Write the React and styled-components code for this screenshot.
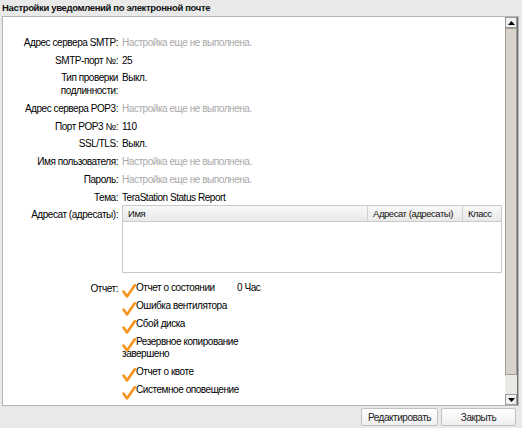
import React from 'react';
import styled, { createGlobalStyle } from 'styled-components';

const GlobalStyle = createGlobalStyle`
  html, body {
    margin: 0;
    padding: 0;
    background: #e9e9e9;
  }
  body {
    font-family: "Liberation Sans", Arial, sans-serif;
    font-size: 10px;
    letter-spacing: -0.45px;
    color: #000;
  }
`;

const rows = [
  { label: 'Адрес сервера SMTP:', value: 'Настройка еще не выполнена.', muted: true },
  { label: 'SMTP-порт №:', value: '25' },
  { label: 'Тип проверки подлинности:', value: 'Выкл.' },
  { label: 'Адрес сервера POP3:', value: 'Настройка еще не выполнена.', muted: true },
  { label: 'Порт POP3 №:', value: '110' },
  { label: 'SSL/TLS:', value: 'Выкл.' },
  { label: 'Имя пользователя:', value: 'Настройка еще не выполнена.', muted: true },
  { label: 'Пароль:', value: 'Настройка еще не выполнена.', muted: true },
  { label: 'Тема:', value: 'TeraStation Status Report' },
];

const reports = [
  'Отчет о состоянии',
  'Ошибка вентилятора',
  'Сбой диска',
  'Резервное копирование завершено',
  'Отчет о квоте',
  'Системное оповещение',
];

const Check = () => (
  <CheckIcon viewBox="0 0 14 14">
    <path d="M1.5 7.5 L5 12.5 L12.8 1.2" fill="none" stroke="#f7941d" strokeWidth="2.6" strokeLinecap="round" strokeLinejoin="round" />
  </CheckIcon>
);

const Arrow = ({ up }) => (
  <svg width="7" height="4" viewBox="0 0 7 4">
    <path d={up ? 'M0 4 L3.5 0 L7 4 Z' : 'M0 0 L3.5 4 L7 0 Z'} fill="#000" />
  </svg>
);

const App = () => {
  return (
    <Window>
      <GlobalStyle />
      <Title>Настройки уведомлений по электронной почте</Title>
      <Panel>
        <Content>
          <Form>
            {rows.map((r) => (
              <React.Fragment key={r.label}>
                <Label>{r.label}</Label>
                <Value muted={r.muted}>{r.value}</Value>
              </React.Fragment>
            ))}
            <Label>Адресат (адресаты):</Label>
            <Table>
              <HeadRow>
                <HeadCell>Имя</HeadCell>
                <HeadCell w={95}>Адресат (адресаты)</HeadCell>
                <HeadCell w={38} last>Класс</HeadCell>
              </HeadRow>
            </Table>
            <ReportLabel>Отчет:</ReportLabel>
            <ReportWrap>
              <ReportList>
                {reports.map((t) => (
                  <ReportItem key={t}>
                    <Check />
                    {t}
                  </ReportItem>
                ))}
              </ReportList>
              <Period>0 Час</Period>
            </ReportWrap>
          </Form>
        </Content>
        <Scrollbar>
          <ScrollBtn><Arrow up /></ScrollBtn>
          <Thumb />
          <Track />
          <ScrollBtn><Arrow /></ScrollBtn>
        </Scrollbar>
      </Panel>
      <Footer>
        <Button w={77}>Редактировать</Button>
        <Button w={75}>Закрыть</Button>
      </Footer>
    </Window>
  );
};

export default App;

const Window = styled.div`
  width: 522px;
  height: 428px;
  display: flex;
  flex-direction: column;
  overflow: hidden;
`;

const Title = styled.div`
  height: 16px;
  line-height: 15px;
  padding-left: 2px;
  font-weight: bold;
  font-size: 9.5px;
  letter-spacing: -0.35px;
  color: #111;
`;

const Panel = styled.div`
  height: 388px;
  margin: 0 3px 0 2px;
  background: #fff;
  border: 1px solid #b4b4b4;
  display: flex;
`;

const Content = styled.div`
  flex: 1;
  overflow: hidden;
  padding: 19px 3px 0 19px;
`;

const Form = styled.div`
  display: grid;
  grid-template-columns: 96px 1fr;
  column-gap: 4px;
  row-gap: 4.7px;
  line-height: 13px;
`;

const Label = styled.div`
  text-align: right;
  color: #000;
`;

const Value = styled.div`
  color: ${(p) => (p.muted ? '#a9a9a9' : '#000')};
`;

const Table = styled.div`
  height: 68px;
  box-sizing: border-box;
  border: 1px solid #c9c9c9;
  margin-top: -3px;
  background: #fff;
`;

const HeadRow = styled.div`
  display: flex;
  height: 15px;
  border-bottom: 1px solid #c9c9c9;
  background: linear-gradient(#f8f8f8, #e9e9e9);
  font-size: 9.5px;
`;

const HeadCell = styled.div`
  flex: ${(p) => (p.w ? `0 0 ${p.w}px` : '1')};
  padding-left: 5px;
  line-height: 15px;
  border-right: ${(p) => (p.last ? 'none' : '1px solid #cfcfcf')};
  color: #111;
  box-sizing: border-box;
`;

const ReportLabel = styled(Label)`
  margin-top: 4px;
`;

const ReportWrap = styled.div`
  margin-top: 4px;
  display: grid;
  grid-template-columns: 115px auto;
  align-items: start;
`;

const ReportList = styled.div`
  grid-column: 1 / span 2;
  grid-row: 1;
  width: 124px;
  display: flex;
  flex-direction: column;
  gap: 6px;
`;

const ReportItem = styled.div`
  color: #000;
  line-height: 12px;
`;

const CheckIcon = styled.svg`
  width: 14px;
  height: 14px;
  vertical-align: -3px;
  margin: -3px 0 -2px 0;
  position: relative;
  top: 2px;
`;

const Period = styled.div`
  grid-column: 2;
  grid-row: 1;
  color: #000;
  line-height: 12px;
`;

const Scrollbar = styled.div`
  width: 12px;
  display: flex;
  flex-direction: column;
  background: #ebe9e5;
  border-right: 1px solid #6f6f6f;
`;

const ScrollBtn = styled.div`
  height: 11px;
  display: flex;
  align-items: center;
  justify-content: center;
  background: #f0f0ee;
  border: 1px solid #9a9a9a;
  box-sizing: border-box;
`;

const Thumb = styled.div`
  height: 347px;
  background: #d8d4cc;
  border: 1px solid #a19d96;
  box-sizing: border-box;
`;

const Track = styled.div`
  flex: 1;
`;

const Footer = styled.div`
  flex: 1;
  display: flex;
  justify-content: flex-end;
  gap: 3px;
  padding: 2px 6px 0 0;
`;

const Button = styled.div`
  width: ${(p) => p.w}px;
  height: 18px;
  box-sizing: border-box;
  border: 1px solid #c2c2c2;
  border-radius: 2px;
  background: linear-gradient(#ffffff, #efefef);
  font-size: 10px;
  color: #222;
  display: flex;
  align-items: center;
  justify-content: center;
`;
